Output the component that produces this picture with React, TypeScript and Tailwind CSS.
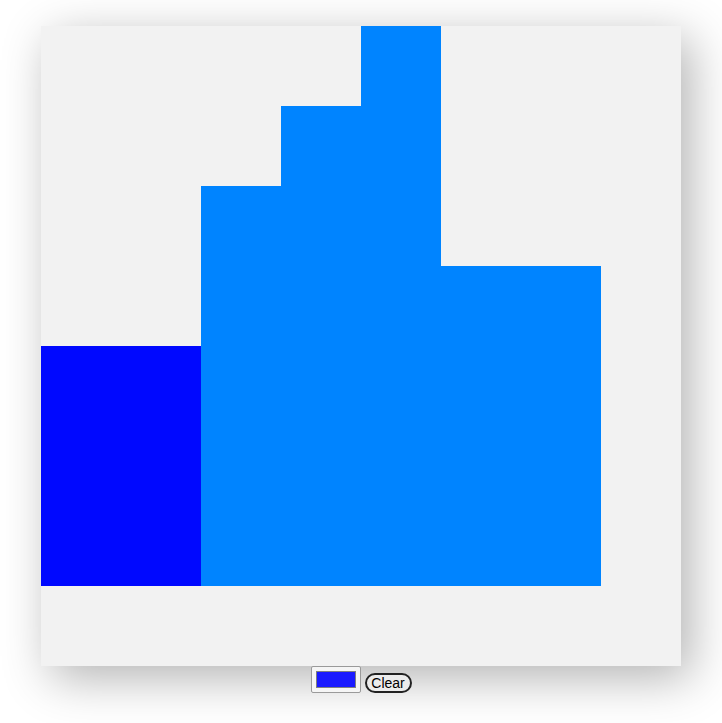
import React from "react";

const bars = [
  { h: 240, color: "bg-[#0008ff]" },
  { h: 240, color: "bg-[#0008ff]" },
  { h: 400, color: "bg-[#0084ff]" },
  { h: 480, color: "bg-[#0084ff]" },
  { h: 560, color: "bg-[#0084ff]" },
  { h: 320, color: "bg-[#0084ff]" },
  { h: 320, color: "bg-[#0084ff]" },
  { h: 0, color: "" },
];

const App = () => {
  return (
    <div className="min-h-screen bg-white flex flex-col items-center pt-[26px] font-['Liberation_Sans',Arial,sans-serif]">
      <div className="w-[640px] h-[640px] bg-[#f2f2f2] shadow-[10px_12px_45px_rgba(0,0,0,0.3)] flex items-end pb-[80px]">
        {bars.map((b, i) => (
          <div
            key={i}
            className={`w-[80px] ${b.color}`}
            style={{ height: b.h }}
          />
        ))}
      </div>

      <div className="flex items-end gap-1">
        <div className="w-[50px] h-[27px] border border-[#9a9a9a] rounded-[2px] bg-[#f5f5f5] flex items-center justify-center">
          <div className="w-[40px] h-[17px] border border-[#808080] bg-[#1a1aff]" />
        </div>
        <button
          type="button"
          className="h-[20px] w-[47px] border-2 border-[#222] rounded-full bg-[#ececec] text-[14px] leading-none text-black"
        >
          Clear
        </button>
      </div>
    </div>
  );
};

export default App;
